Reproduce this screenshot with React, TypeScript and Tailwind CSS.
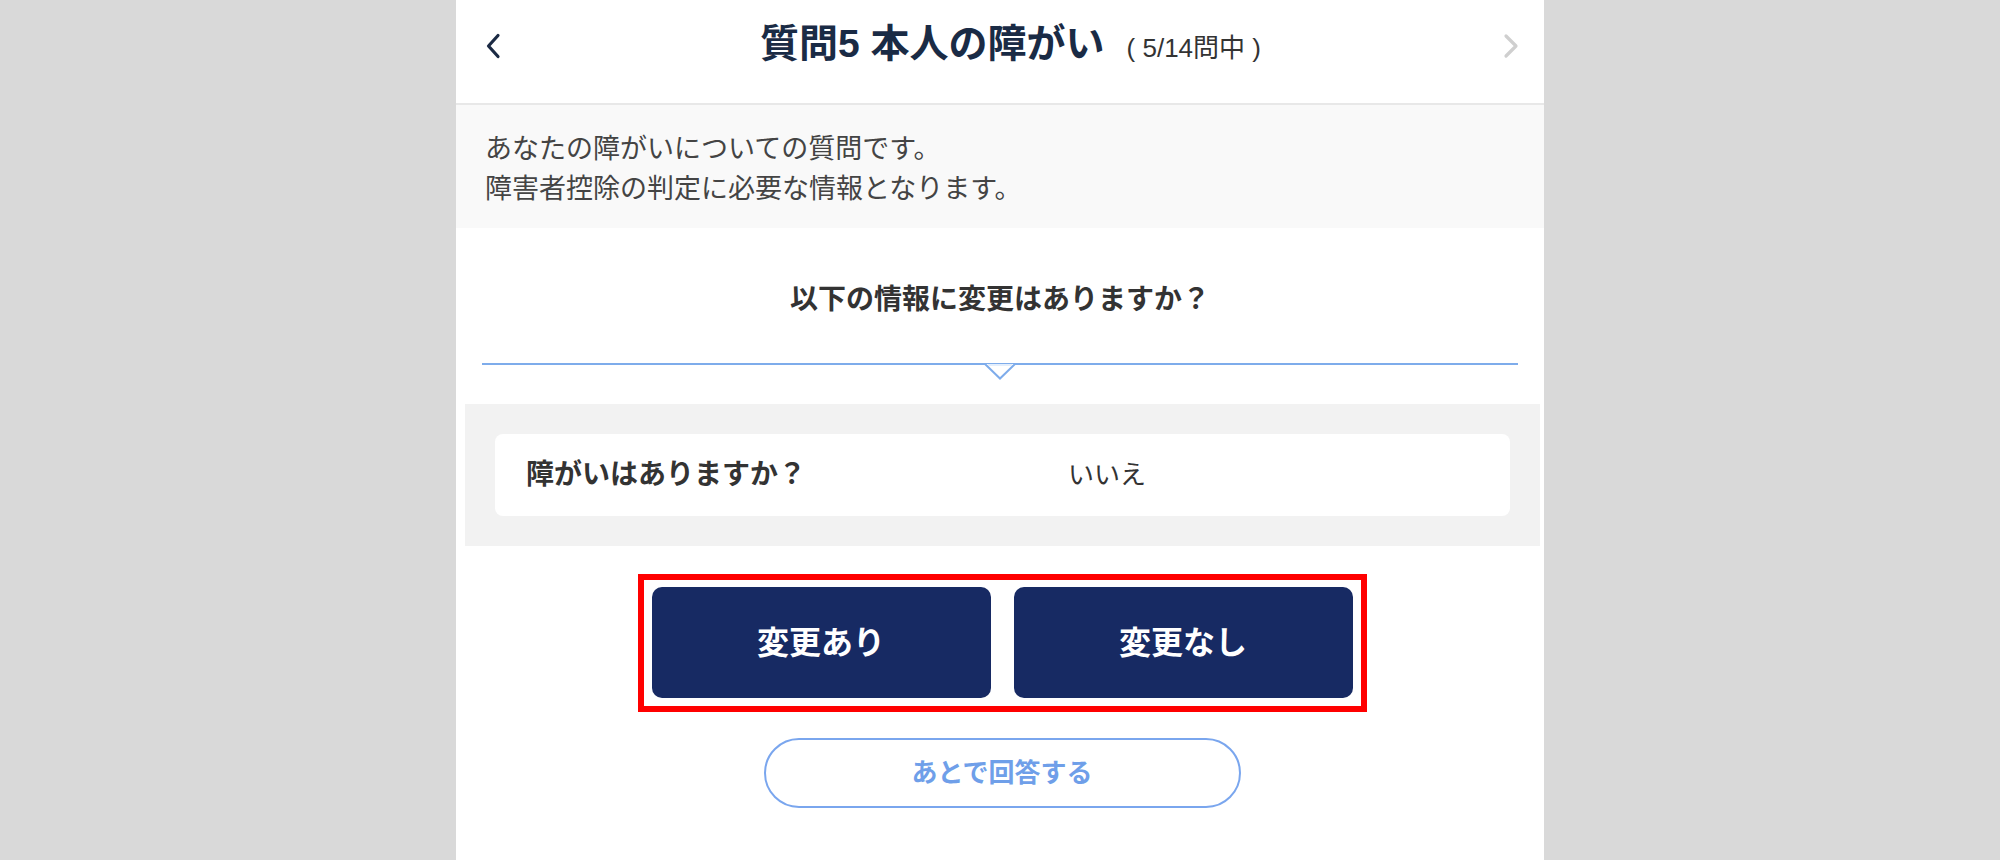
const font = "font-['Liberation_Sans','Noto_Sans_CJK_JP',sans-serif]";

function BackIcon() {
  return (
    <svg width="16" height="26" viewBox="0 0 16 26" fill="none">
      <path d="M13 2.5 L3.5 13 L13 23.5" stroke="#1b2a44" strokeWidth="3.2" strokeLinecap="round" strokeLinejoin="round" />
    </svg>
  );
}

function NextIcon() {
  return (
    <svg width="18" height="26" viewBox="0 0 18 26" fill="none">
      <path d="M4 3 L14 13 L4 23" stroke="#cfcfcf" strokeWidth="3.2" strokeLinecap="round" strokeLinejoin="round" />
    </svg>
  );
}

function Pointer() {
  return (
    <div className="relative mx-[26px] border-t-2 border-[#7eaceb]">
      <svg
        className="absolute left-1/2 -translate-x-1/2 -top-[2px]"
        width="32"
        height="17"
        viewBox="0 0 32 17"
        fill="none"
      >
        <path d="M1 1 L16 15.5 L31 1 Z" fill="#ffffff" />
        <path d="M1 1 L16 15.5 L31 1" stroke="#7eaceb" strokeWidth="2" />
        <path d="M4 2 L28 2" stroke="#e3eefc" strokeWidth="2" />
      </svg>
    </div>
  );
}

export default function App() {
  return (
    <div className={`min-h-screen bg-[#d9d9d9] ${font}`}>
      <div className="mx-auto w-[1088px] min-h-[860px] bg-white">
        {/* header */}
        <div className="flex h-[105px] items-center border-b-2 border-[#e8e8e8] pl-[29px] pr-[24px] pb-[12px]">
          <BackIcon />
          <div className="flex flex-1 items-baseline justify-center pl-[18px]">
            <h1 className="text-[39px] font-bold leading-[48px] text-[#1a2b45]">質問5 本人の障がい</h1>
            <span className="ml-[22px] text-[26px] leading-[48px] text-[#333333]">( 5/14問中 )</span>
          </div>
          <NextIcon />
        </div>

        {/* description */}
        <div className="bg-[#f9f9f9] px-[29px] pt-[24px] pb-[19px] text-[27px] leading-[40px] text-[#444444]">
          <p>あなたの障がいについての質問です。</p>
          <p>障害者控除の判定に必要な情報となります。</p>
        </div>

        {/* question */}
        <div className="pt-[52px]">
          <p className="text-center text-[28px] font-bold leading-[40px] text-[#333333]">以下の情報に変更はありますか？</p>
          <div className="mt-[43px]">
            <Pointer />
          </div>
        </div>

        <div className="mt-[39px] ml-[9px] mr-[4px] bg-[#f2f2f2] p-[30px]">
          <div className="flex h-[82px] items-center rounded-[8px] bg-white px-[31px] text-[#333333]">
            <span className="w-[542px] text-[28px] font-bold">障がいはありますか？</span>
            <span className="text-[26px]">いいえ</span>
          </div>
        </div>

        {/* actions */}
        <div className="mt-[28px] flex justify-center pl-[4px]">
          <div className="flex gap-[23px] border-[6px] border-[#ff0000] p-[8px] pt-[7px]">
            <button className="h-[111px] w-[339px] rounded-[10px] bg-[#172a63] text-[32px] font-bold text-white">変更あり</button>
            <button className="h-[111px] w-[339px] rounded-[10px] bg-[#172a63] text-[32px] font-bold text-white">変更なし</button>
          </div>
        </div>

        <div className="mt-[26px] flex justify-center pl-[4px]">
          <button className="h-[70px] w-[477px] rounded-full border-2 border-[#7aa6ee] text-[26px] font-bold text-[#6f9fe9]">
            あとで回答する
          </button>
        </div>
      </div>
    </div>
  );
}
